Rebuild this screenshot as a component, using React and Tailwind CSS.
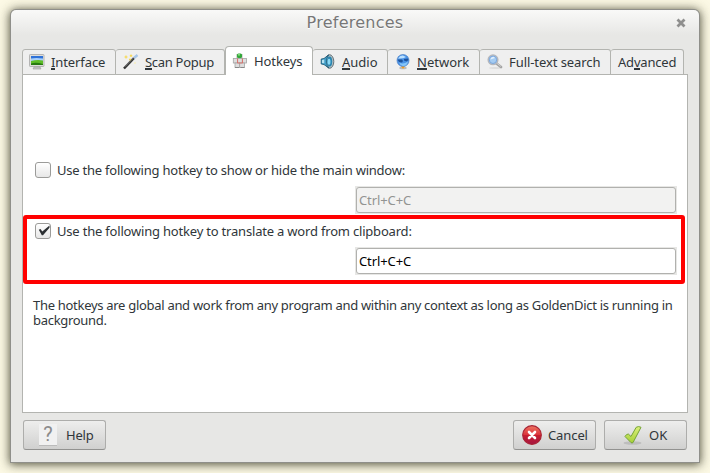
import React from "react";

function MonitorIcon() {
  return (
    <svg width="16" height="16" viewBox="0 0 16 16">
      <rect x="0.5" y="0.5" width="14.5" height="12" rx="0.7" fill="#dededb" stroke="#b4b4b4" />
      <rect x="2" y="2" width="12" height="9" fill="#2f72d8" />
      <path d="M2 4.5 Q7 3.5 14 4.5 V7 H2Z" fill="#a8d0fa" />
      <path d="M2 7 Q8 5.5 14 6.5 V11 H2Z" fill="#5fbe28" />
      <path d="M2 9.5 Q7 8 14 10 V11 H2Z" fill="#277a10" />
      <path d="M5 13 H11 L12 15 H4Z" fill="#c8c8c8" stroke="#9e9e9e" strokeWidth="0.6" />
    </svg>
  );
}

function WandIcon() {
  return (
    <svg width="16" height="16" viewBox="0 0 16 16">
      <path d="M1 14.5 L11 4" stroke="#333" strokeWidth="2.5" />
      <path d="M2 12.7 L10.5 3.8" stroke="#aaa" strokeWidth="0.6" />
      <path d="M11 4 L14.5 1" stroke="#a5c5e8" strokeWidth="2.4" />
      <path d="M3 1.5v3M1.5 3h3M8 0.5v2.5M6.8 1.7h2.5M7 4.5v2M6 5.5h2" stroke="#f6d74a" strokeWidth="1.1" />
      <path d="M12 8v2M11 9h2" stroke="#f6eec2" strokeWidth="1" />
    </svg>
  );
}

function KeysIcon() {
  return (
    <svg width="16" height="16" viewBox="0 0 16 16">
      <g fill="#dedede" stroke="#a4a4a4" strokeWidth="0.8">
        <rect x="5" y="1.5" width="5" height="4" />
        <rect x="1.3" y="5.5" width="4.4" height="4.5" />
        <rect x="5.7" y="5.5" width="4.6" height="4.5" />
        <rect x="10.3" y="5.5" width="4.2" height="4.5" />
        <rect x="3" y="10" width="4.7" height="4.5" />
        <rect x="7.7" y="10" width="4.7" height="4.5" />
      </g>
      <path d="M5.5 5.5v4.5h5V5.5" fill="none" stroke="#e36a62" strokeWidth="0.8" />
      <rect x="5" y="0.5" width="5" height="4.5" rx="1.5" fill="#31a839" />
      <rect x="6" y="1" width="2" height="1.6" fill="#81dd7c" />
      <path d="M3 14.5h4M8.5 14.5h4" stroke="#888" />
    </svg>
  );
}

function SpeakerIcon() {
  return (
    <svg width="16" height="16" viewBox="0 0 16 16">
      <ellipse cx="9.6" cy="7.5" rx="4.2" ry="6.8" fill="#b4bec2" stroke="#66737a" />
      <path d="M1.2 5 L4 4.5 L8.6 0.9 Q6.3 4 6.6 8 Q6.8 12 9 14 L4 10.6 L1.2 10Z" fill="#3f9cc6" stroke="#17526f" strokeWidth="0.8" />
      <ellipse cx="9.6" cy="7.5" rx="2.6" ry="5" fill="#2b86b0" />
      <ellipse cx="9" cy="7.8" rx="1.5" ry="3" fill="#8bd9f6" />
      <path d="M2 6L4.3 5.5v3.8l-2.3-.4Z" fill="#b5e1f1" />
    </svg>
  );
}

function GlobeIcon() {
  return (
    <svg width="16" height="16" viewBox="0 0 16 16">
      <ellipse cx="8" cy="14" rx="3.8" ry="1.3" fill="#bbb" />
      <path d="M6.5 11h3l.8 3H5.7Z" fill="#d5bb91" />
      <circle cx="8" cy="6.5" r="6" fill="#4a92e6" stroke="#4f83c4" strokeWidth="0.7" />
      <path d="M3 4.5Q5 1 8 1.5L11 3Q8 5 3 4.5Z" fill="#bce1ff" />
      <path d="M2.5 5.5l4.5 0 1 1.5-1 1.5L4 8ZM9 5l4-.5 .5 1.5-2 1.5L9 6.5Z" fill="#1d529c" />
      <path d="M4 8.5Q8 11 13 7.5 12 12 8 12 5 11.5 4 8.5Z" fill="#84c5f9" />
      <circle cx="8" cy="13.5" r="1.1" fill="#f49d22" />
    </svg>
  );
}

function SearchIcon() {
  return (
    <svg width="16" height="16" viewBox="0 0 16 16">
      <ellipse cx="8" cy="14" rx="6" ry="1" fill="#dedede" />
      <path d="M9.5 9.5L14 13" stroke="#a4a4a4" strokeWidth="2.8" strokeLinecap="round" />
      <path d="M9 8.5L14 12.5" stroke="#d3d3d3" strokeWidth="0.9" />
      <circle cx="6" cy="5.8" r="4.8" fill="#a5ccf2" stroke="#b5b7bc" strokeWidth="1.5" />
      <circle cx="6" cy="5.8" r="3.7" fill="none" stroke="#719ed8" strokeWidth="0.8" />
      <path d="M3.5 5.5Q4 2.8 6.6 2.8L8 4Z" fill="#e0f0ff" />
    </svg>
  );
}

function CancelIcon() {
  return (
    <svg width="20" height="20" viewBox="0 0 20 20">
      <defs>
        <linearGradient id="stopRed" x2="0" y2="1">
          <stop stopColor="#ee7562" /><stop offset=".48" stopColor="#dc363c" /><stop offset=".52" stopColor="#c71e30" /><stop offset="1" stopColor="#a51642" />
        </linearGradient>
      </defs>
      <circle cx="10" cy="10" r="9.3" fill="url(#stopRed)" stroke="#a82334" strokeWidth="1.2" />
      <path d="M7 7l6 6M13 7l-6 6" stroke="#fff" strokeWidth="2.6" strokeLinecap="round" />
    </svg>
  );
}

function OkIcon() {
  return (
    <svg width="20" height="20" viewBox="0 0 20 20">
      <defs><linearGradient id="okGreen" x2="0" y2="1"><stop stopColor="#dcf07c" /><stop offset="1" stopColor="#a5d036" /></linearGradient></defs>
      <ellipse cx="9.5" cy="18" rx="9" ry="1.7" fill="#aaa" opacity=".55" />
      <path d="M2 11.5Q3.3 9 5.3 9L8 11.5L13.2 2.3Q15.5 0.8 18 2.3L10 17.6Q9 18.3 8 17.6Z" fill="url(#okGreen)" stroke="#76a436" strokeWidth="1" strokeLinejoin="round" />
    </svg>
  );
}

const tabs = [
  { icon: <MonitorIcon />, pre: "", key: "I", post: "nterface", width: "w-[94px]", pad: "pl-[6px]", gap: "gap-[6px]", track: "tracking-[-0.1px]" },
  { icon: <WandIcon />, pre: "", key: "S", post: "can Popup", width: "w-[109px]", pad: "pl-[7px]", gap: "gap-[6px]", track: "tracking-[-0.3px]" },
  { icon: <KeysIcon />, pre: "Hotkeys", key: "", post: "", width: "w-[88px]", pad: "pl-[6px]", gap: "gap-[6px]", track: "tracking-[-0.1px]", active: true },
  { icon: <SpeakerIcon />, pre: "", key: "A", post: "udio", width: "w-[75px]", pad: "pl-[7px]", gap: "gap-[6px]", track: "tracking-[0px]" },
  { icon: <GlobeIcon />, pre: "", key: "N", post: "etwork", width: "w-[92px]", pad: "pl-[7px]", gap: "gap-[6px]", track: "tracking-[0px]" },
  { icon: <SearchIcon />, pre: "Full-text search", key: "", post: "", width: "w-[131px]", pad: "pl-[7px]", gap: "gap-[6px]", track: "tracking-[-0.07px]" },
  { pre: "Ad", key: "v", post: "anced", width: "w-[73px]", pad: "pl-[7px]", gap: "", track: "tracking-[-0.2px]" },
];

function Tab({ tab, first }) {
  const shape = tab.active
    ? "h-[29px] bg-white border-x border-t rounded-t-[4px] pb-[1px]"
    : "h-[26px] bg-[#efefef] border-y border-r rounded-t-[3px]";
  return (
    <div className={`${shape} ${tab.width} ${tab.pad} ${tab.gap} ${first ? "border-l" : ""} flex shrink-0 items-center border-[#b3b4b0] whitespace-nowrap`}>
      {tab.icon && <span className="shrink-0">{tab.icon}</span>}
      <span className={`${tab.track} leading-[16px]`}>
        {tab.pre}
        {tab.key && <span className="inline-block h-[16px] border-b-2 border-[#30363a]">{tab.key}</span>}
        {tab.post}
      </span>
    </div>
  );
}

function CheckRow({ checked, children, track }) {
  return (
    <div className="flex h-[16px] items-center gap-[6px]">
      <span className="flex size-[16px] items-center justify-center rounded-[3px] border border-[#9b9b99] bg-linear-to-b from-white to-[#e7e7e7]">
        {checked && (
          <svg width="14" height="14" viewBox="0 0 14 14">
            <path d="M2.8 5.8L4.5 5L6.3 7.5L13.5 1.6V3.8L7 11.2H5.8Z" fill="#2c3033" />
          </svg>
        )}
      </span>
      <span className={`whitespace-nowrap ${track}`}>{children}</span>
    </div>
  );
}

function HotkeyField({ disabled }) {
  return (
    <div className="h-[28px] w-[322px] bg-[#e7e7e5] p-[1px]">
      <div className={`flex h-[26px] items-center rounded-[3px] border border-[#b1b1ae] pl-[2px] tracking-[-0.1px] ${disabled ? "bg-[#f2f2f1] text-[#929492]" : "bg-white text-black"}`}>
        Ctrl+C+C
      </div>
    </div>
  );
}

const buttonBase = "flex h-[30px] w-[83px] items-center rounded-[3px] border border-[#adadab] border-b-[#929290] bg-linear-to-b from-[#eeeeed] to-[#d0d0cf]";

export default function App() {
  return (
    <div className="h-[473px] w-[710px] overflow-hidden bg-[#fcf9e5] pl-[11px] pt-[10px] font-['Noto_Sans',sans-serif] text-[13px] leading-[15px] text-[#30363a]">
      <div className="flex h-[452px] w-[688px] flex-col rounded-t-[5px] bg-[#e7e7e5] bg-[linear-gradient(#f9f9f8,#e7e7e5_25px)] shadow-[0_0_0_1px_#8f8f8a,0_1px_9px_1px_rgba(65,65,45,0.85),0_1px_14px_3px_rgba(65,65,45,0.2)]">
        <header className="grid h-[36px] shrink-0 grid-cols-[1fr_auto_1fr] items-start pt-[4px]">
          <span />
          <h1 className="font-['DejaVu_Sans',sans-serif] text-[16px] tracking-[0.25px] leading-[18px] text-[#777] [text-shadow:0_1px_0_white]">Preferences</h1>
          <span className="justify-self-end pr-[13px] pt-[4px]">
            <svg width="10" height="10" viewBox="0 0 10 10"><path d="M1.5 1.5l7 7M8.5 1.5l-7 7" stroke="#8f8f8e" strokeWidth="2.8" /></svg>
          </span>
        </header>
        <main className="ml-[11px] w-[666px]">
          <nav className="relative z-10 flex h-[29px] items-end">
            {tabs.map((tab, i) => <Tab key={i} tab={tab} first={i === 0} />)}
          </nav>
          <section className="-mt-px flex h-[339px] flex-col border border-[#b3b4b0] bg-white pt-[87px]">
            <div className="pl-[12px]">
              <CheckRow track="tracking-[-0.225px]">Use the following hotkey to show or hide the main window:</CheckRow>
              <div className="mt-[8px] pl-[320px]"><HotkeyField disabled /></div>
            </div>
            <div className="mt-[1px] h-[69px] w-[662px] rounded-[3px] border-4 border-[#ff0000] pl-[8px] pt-[4px]">
              <CheckRow checked track="tracking-[-0.195px]">Use the following hotkey to translate a word from clipboard:</CheckRow>
              <div className="mt-[8px] pl-[320px]"><HotkeyField /></div>
            </div>
            <p className="mt-[14px] pl-[10px] pr-[8px] tracking-[-0.295px]">
              The hotkeys are global and work from any program and within any context as long as GoldenDict is running in background.
            </p>
          </section>
          <footer className="flex pl-[1px] pt-[7px]">
            <button className={`${buttonBase} gap-[9px] pl-[15px]`}>
              <span className="flex h-[22px] w-[18px] items-center justify-center border-b border-[#bbb] bg-[#f1f1f1] font-['Roboto',sans-serif] text-[20px] text-[#8c8c8c]">?</span>
              <span className="tracking-[-0.2px]">Help</span>
            </button>
            <button className={`${buttonBase} ml-[407px] gap-[6px] pl-[8px]`}><CancelIcon /><span className="tracking-[-0.1px]">Cancel</span></button>
            <button className={`${buttonBase} ml-[8px] gap-[6px] pl-[18px]`}><OkIcon /><span>OK</span></button>
          </footer>
        </main>
      </div>
    </div>
  );
}
